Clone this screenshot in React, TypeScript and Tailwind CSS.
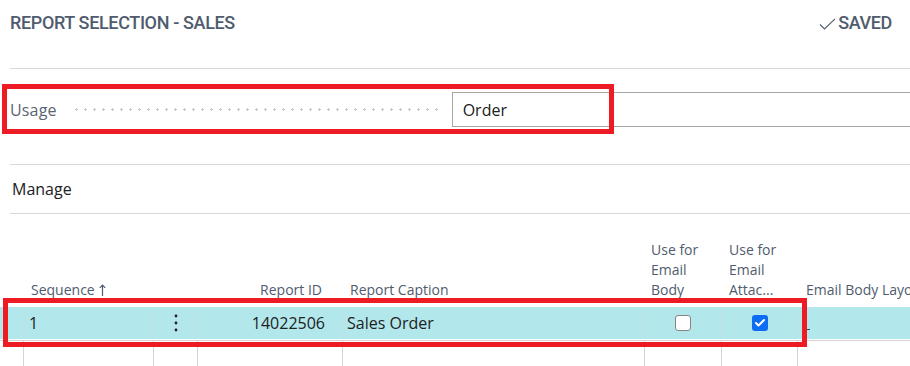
import { Check } from 'lucide-react';

const cols = [
  { w: 'w-[24px]' },
  { w: 'w-[130px]' },
  { w: 'w-[44px]' },
  { w: 'w-[145px]' },
  { w: 'w-[302px]' },
  { w: 'w-[77px]' },
  { w: 'w-[76px]' },
  { w: 'flex-1' },
];

function Kebab() {
  return (
    <svg width="4" height="18" viewBox="0 0 4 18" className="text-[#212121]">
      <circle cx="2" cy="2" r="1.4" fill="currentColor" />
      <circle cx="2" cy="9" r="1.4" fill="currentColor" />
      <circle cx="2" cy="16" r="1.4" fill="currentColor" />
    </svg>
  );
}

export default function App() {
  return (
    <div className="relative w-[910px] h-[366px] overflow-hidden bg-white font-['Open_Sans',sans-serif]">
      {/* Header */}
      <header className="ml-[10px] h-[69px] border-b border-[#d5d8dc] flex items-start justify-between pt-[11px] pr-[18px] font-['Roboto',sans-serif] font-medium text-[18px] leading-[24px] tracking-[-0.02em] text-[#505c6d]">
        <h1>REPORT SELECTION - SALES</h1>
        <div className="flex items-center gap-[2px]">
          <svg width="17" height="12" viewBox="0 0 17 12" className="mt-[1px]">
            <path d="M1 6.5 L5.5 11 L16 0.8" fill="none" stroke="#505c6d" strokeWidth="1.1" />
          </svg>
          <span>SAVED</span>
        </div>
      </header>

      {/* Usage field */}
      <div className="mt-[23px] ml-[10px] flex items-center h-[35px]">
        <span className="text-[16px] text-[#5a6472] leading-[22px] pr-[15px] tracking-[0.01em]">Usage</span>
        <div className="w-[368px] h-[3px] bg-[radial-gradient(circle,#c4c7cc_1px,transparent_1.2px)] bg-[length:9px_3px]"></div>
        <div className="ml-[12px] flex-1 h-[35px] border-y border-l border-[#a6a6a6] flex items-center pl-[10px] text-[16px] text-[#212121]">
          Order
        </div>
      </div>

      {/* Manage */}
      <div className="mt-[37px] ml-[10px] h-[50px] border-y border-[#d5d8dc] flex items-center pl-[2px] text-[16px] text-[#212121]">
        Manage
      </div>

      {/* Table */}
      <div className="h-[93px] flex items-end pb-[7px] text-[14px] leading-[20px] text-[#505c6d]">
        <div className="w-[24px]"></div>
        <div className="w-[130px] pl-[7px] flex items-center gap-[4px]">
          Sequence
          <svg width="7" height="12" viewBox="0 0 7 12">
            <path d="M3.5 12 V1 M0.8 3.8 L3.5 1 L6.2 3.8" fill="none" stroke="#505c6d" strokeWidth="1.2" />
          </svg>
        </div>
        <div className="w-[44px]"></div>
        <div className="w-[145px] pr-[21px] text-right">Report ID</div>
        <div className="w-[302px] pl-[7px]">Report Caption</div>
        <div className="w-[77px] pl-[6px]">Use for<br />Email<br />Body</div>
        <div className="w-[76px] pl-[7px]">Use for<br />Email<br />Attac...</div>
        <div className="flex-1 pl-[8px] whitespace-nowrap overflow-hidden">Email Body Layout Description</div>
      </div>

      <div className="h-[34px] border-b border-[#d4d4d4]">
        <div className="h-[32px] bg-[#b2e8eb] flex text-[16px] text-[#212121]">
          <div className="w-[24px] border-r border-[#c4dfe2]"></div>
          <div className="w-[130px] border-r border-[#c4dfe2] pl-[5px] flex items-center">1</div>
          <div className="w-[44px] border-r border-[#c4dfe2] flex items-center justify-center"><Kebab /></div>
          <div className="w-[145px] border-r border-[#c4dfe2] pr-[17px] flex items-center justify-end">14022506</div>
          <div className="w-[302px] border-r border-[#c4dfe2] pl-[4px] flex items-center">Sales Order</div>
          <div className="w-[77px] border-r border-[#c4dfe2] flex items-center justify-center">
            <span className="w-[16px] h-[16px] rounded-[3px] border border-[#858585] bg-white"></span>
          </div>
          <div className="w-[76px] border-r border-[#c4dfe2] flex items-center justify-center">
            <span className="w-[16px] h-[16px] rounded-[3px] bg-[#0f6cf5] flex items-center justify-center">
              <Check className="size-[12px] text-white" strokeWidth={4} />
            </span>
          </div>
          <div className="flex-1 pl-[6px] flex items-end pb-[9px]">
            <span className="w-[6px] h-px bg-[#1f5a5e]"></span>
          </div>
        </div>
      </div>

      <div className="h-[30px] flex">
        {cols.map((c, i) => (
          <div key={i} className={`${c.w} ${i < 7 ? 'border-r border-[#d4d4d4]' : ''}`}></div>
        ))}
      </div>

      {/* annotation boxes */}
      <div className="absolute left-[2px] top-[84px] w-[612px] h-[50px] border-[5px] border-[#ed1c24]"></div>
      <div className="absolute left-[3px] top-[298px] w-[804px] h-[49px] border-[5px] border-[#ed1c24]"></div>
    </div>
  );
}
